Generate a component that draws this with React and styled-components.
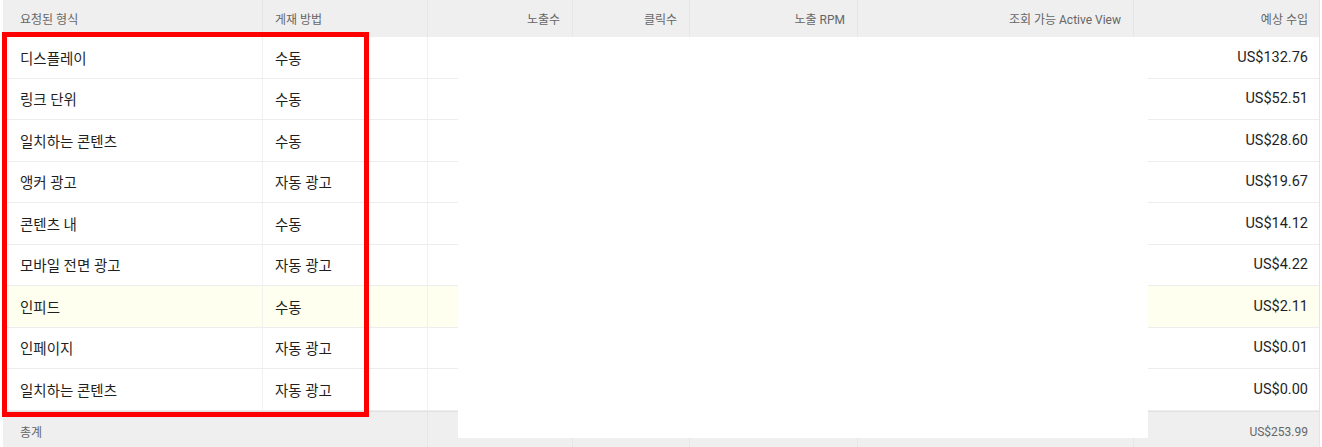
import styled, { createGlobalStyle } from "styled-components";

const GlobalStyle = createGlobalStyle`
    html, body {
        margin: 0;
        padding: 0;
        background: #FFFFFF;
        overflow: hidden;
    }
    body {
        font-family: Roboto, "Noto Sans CJK KR", sans-serif;
    }
`;

const rows = [
    { format: "디스플레이", method: "수동", revenue: "US$132.76" },
    { format: "링크 단위", method: "수동", revenue: "US$52.51" },
    { format: "일치하는 콘텐츠", method: "수동", revenue: "US$28.60" },
    { format: "앵커 광고", method: "자동 광고", revenue: "US$19.67" },
    { format: "콘텐츠 내", method: "수동", revenue: "US$14.12" },
    { format: "모바일 전면 광고", method: "자동 광고", revenue: "US$4.22" },
    { format: "인피드", method: "수동", revenue: "US$2.11", highlight: true },
    { format: "인페이지", method: "자동 광고", revenue: "US$0.01" },
    { format: "일치하는 콘텐츠", method: "자동 광고", revenue: "US$0.00" },
];

const headers = [
    { label: "요청된 형식" },
    { label: "게재 방법" },
    { label: "노출수", right: true },
    { label: "클릭수", right: true },
    { label: "노출 RPM", right: true },
    { label: "조회 가능 Active View", right: true },
    { label: "예상 수입", right: true },
];

export default function App() {
    return (
        <Page>
            <GlobalStyle />
            <TableWrap>
                <HeaderRow>
                    {headers.map((h, index) => (
                        <HeadCell key={index} $right={h.right} $first={index === 0}>{h.label}</HeadCell>
                    ))}
                </HeaderRow>

                {rows.map((r, index) => (
                    <Row key={index} $highlight={r.highlight}>
                        <Cell $first>{r.format}</Cell>
                        <Cell>{r.method}</Cell>
                        <Cell $right></Cell>
                        <Cell $right></Cell>
                        <Cell $right></Cell>
                        <Cell $right></Cell>
                        <Cell $right>{r.revenue}</Cell>
                    </Row>
                ))}

                <FooterRow>
                    <FootCell $first $noBorder>총계</FootCell>
                    <FootCell></FootCell>
                    <FootCell></FootCell>
                    <FootCell></FootCell>
                    <FootCell></FootCell>
                    <FootCell></FootCell>
                    <FootCell $right>US$253.99</FootCell>
                </FooterRow>

                <Cover />
                <Highlight />
            </TableWrap>
        </Page>
    );
}

const columns = "260px 165px 145px 117px 168px 276px 184px";

const Page = styled.div`
    width: 1322px;
    height: 447px;
    padding-left: 3px;
    box-sizing: border-box;
`;

const TableWrap = styled.div`
    position: relative;
    width: 1316px;
    border-right: 1px solid #E4E4E4;
`;

const HeaderRow = styled.div`
    display: grid;
    grid-template-columns: ${columns};
    height: 37px;
    background: #EFEFEF;
`;

const HeadCell = styled.div`
    display: flex;
    align-items: center;
    justify-content: ${(p) => (p.$right ? "flex-end" : "flex-start")};
    padding: 0 12px 0 ${(p) => (p.$first ? "17px" : "12px")};
    border-right: 1px solid #E6E6E6;
    font-size: 12px;
    color: #666666;
    white-space: nowrap;

    &:last-child {
        border-right: none;
        padding-right: 10px;
    }
`;

const Row = styled.div`
    display: grid;
    grid-template-columns: ${columns};
    height: 41.5px;
    box-sizing: border-box;
    border-bottom: 1px solid #EDEDED;
    background: ${(p) => (p.$highlight ? "#FEFFEE" : "#FFFFFF")};
`;

const Cell = styled.div`
    display: flex;
    align-items: center;
    justify-content: ${(p) => (p.$right ? "flex-end" : "flex-start")};
    padding: 0 12px 0 ${(p) => (p.$first ? "17px" : "12px")};
    border-right: 1px solid #F1F1F1;
    font-size: 14.5px;
    color: #1F1F1F;
    white-space: nowrap;

    &:last-child {
        border-right: none;
        padding-right: 10px;
    }
`;

const FooterRow = styled.div`
    display: grid;
    grid-template-columns: ${columns};
    height: 40px;
    background: #EFEFEF;
    border-top: 1px solid #E2E2E2;
`;

const FootCell = styled.div`
    display: flex;
    align-items: center;
    justify-content: ${(p) => (p.$right ? "flex-end" : "flex-start")};
    padding: 0 12px 0 ${(p) => (p.$first ? "17px" : "12px")};
    border-right: 1px solid ${(p) => (p.$noBorder ? "transparent" : "#E6E6E6")};
    font-size: 12px;
    color: #666666;
    white-space: nowrap;

    &:last-child {
        border-right: none;
        padding-right: 10px;
    }
`;

const Cover = styled.div`
    position: absolute;
    left: 455px;
    top: 37px;
    width: 690px;
    height: 401px;
    background: #FFFFFF;
`;

const Highlight = styled.div`
    position: absolute;
    left: -1px;
    top: 32px;
    width: 367px;
    height: 385px;
    box-sizing: border-box;
    border: 5px solid #FF0000;
`;
